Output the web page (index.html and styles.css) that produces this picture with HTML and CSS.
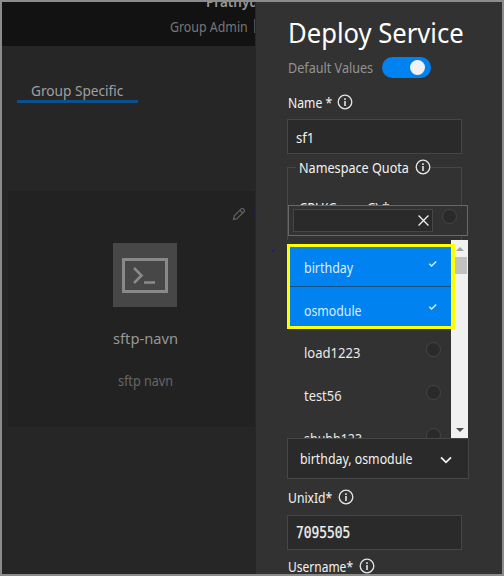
FILE: index.html
```html
<!DOCTYPE html>
<html lang="en">
<head>
<meta charset="utf-8">
<title>Deploy Service</title>
<link rel="stylesheet" href="styles.css">
</head>
<body>
<svg class="defs" width="0" height="0">
  <symbol id="info" viewBox="0 0 16 16"><circle cx="8" cy="8" r="6.8" fill="none" stroke="#e6e6e6" stroke-width="1.3"/><path d="M8 4.2v1.7M8 7v5" stroke="#f0f0f0" stroke-width="1.5"/></symbol>
  <symbol id="check" viewBox="0 0 10 8"><path d="M1.3 3.8 3.6 6 8.2 1.4" fill="none" stroke="#dceeff" stroke-width="1.4"/></symbol>
</svg>
<div class="frame">
  <main class="page">
    <header class="topbar">
      <div class="user"><span class="t">Prathyusha</span></div>
      <div class="role"><span class="t">Group Admin</span><i></i></div>
    </header>
    <nav class="tabs"><a class="tab"><span class="t">Group Specific</span></a></nav>
    <section class="card">
      <div class="actions">
        <svg width="14" height="14" viewBox="0 0 14 14" fill="none" stroke="#626262" stroke-width="1.2"><path d="M1.5 12.5 2.3 8.8 9.4 1.7a1.2 1.2 0 0 1 1.7 0l1.1 1.1a1.2 1.2 0 0 1 0 1.7L5 11.6ZM7.9 3.2l2.8 2.8"/></svg>
        <span class="cut"></span>
      </div>
      <div class="tile"><svg width="46" height="35" viewBox="0 0 46 35" fill="none" stroke="#898989"><path d="M1.5 1.5h43v32h-43Z" stroke-width="3"/><path d="m12 10 7.5 7.5L12 25" stroke-width="2.6"/><path d="M22 24.5h11" stroke-width="2.6"/></svg></div>
      <div class="card-title"><span class="t">sftp-navn</span></div>
      <div class="card-sub"><span class="t">sftp navn</span></div>
    </section>
  </main>
  <aside class="panel">
    <h1><span class="t">Deploy Service</span></h1>
    <div class="switch-row"><span class="t">Default Values</span><div class="switch"></div></div>
    <div class="label name"><span class="t">Name *</span><svg><use href="#info"/></svg></div>
    <div class="input sf"><span class="t">sf1</span></div>
    <div class="group">
      <div class="label legend"><span class="t">Namespace Quota</span><svg><use href="#info"/></svg></div>
      <div class="cpu"><span class="t">CPU(Cores-C) *</span></div>
    </div>
    <div class="select"><span class="t">birthday, osmodule</span><svg width="12" height="8" viewBox="0 0 12 8"><path d="m1 1.3 5 5 5-5" fill="none" stroke="#f2f2f2" stroke-width="1.8"/></svg></div>
    <div class="label unix"><span class="t">UnixId*</span><svg><use href="#info"/></svg></div>
    <div class="input id"><span class="t">7095505</span></div>
    <div class="label username"><span class="t">Username*</span><svg><use href="#info"/></svg></div>
    <div class="dropdown">
      <div class="search"><div class="search-box"><svg width="11" height="11" viewBox="0 0 10 10"><path d="m.5.5 9 9m0-9-9 9" stroke="#eee" stroke-width="1.2"/></svg></div><i class="radio"></i></div>
      <div class="listing">
        <div class="options">
          <div class="option on birthday"><span class="t">birthday</span><svg width="10" height="8"><use href="#check"/></svg></div>
          <div class="option on osmodule"><span class="t">osmodule</span><svg width="10" height="8"><use href="#check"/></svg></div>
          <div class="option load"><span class="t">load1223</span><i class="radio"></i></div>
          <div class="option test"><span class="t">test56</span><i class="radio"></i></div>
          <div class="option shubh"><span class="t">shubh123</span><i class="radio"></i></div>
        </div>
        <div class="scroll"><i class="up"></i><i class="thumb"></i><i class="down"></i></div>
      </div>
      <div class="highlight"></div>
    </div>
    <i class="speck"></i>
  </aside>
</div>
</body>
</html>
```
FILE: styles.css
```css
* { box-sizing: border-box; }
body { margin: 0; background: #323232; color: #f2f2f2; font: 15px/20px "Noto Sans", sans-serif; }
.defs { display: block; }
.frame { display: flex; width: 504px; height: 576px; border: 2px solid #8b8b8b; overflow: hidden; }
.t { display: inline-block; white-space: nowrap; transform: scaleX(var(--s, .84)); transform-origin: 0 50%; }

.page { width: 253px; flex: none; background: #262626; overflow: hidden; }
.topbar { height: 44px; background: #121212; overflow: hidden; }
.user { height: 15px; margin: -11px 0 0 204px; font-weight: 600; color: #989898; --s: .9; }
.role { display: flex; height: 20px; margin: 10px 0 0 168px; color: #777; --s: .825; }
.role .t { width: 84px; flex: none; }
.role i { width: 2px; height: 14px; margin-top: 3px; background: #4a5055; }
.tabs { padding: 34px 0 0 15px; }
.tab { display: block; width: 121px; height: 23px; padding-left: 14px; border-bottom: 3px solid #08518c; color: #a0a0a0; --s: .91; }
.card { height: 236px; margin: 88px 0 0 6px; background: #222; color: #979797; overflow: hidden; }
.actions { display: flex; justify-content: space-between; height: 51px; padding: 16px 0 0 224px; }
.cut { width: 1px; height: 6px; margin-top: 2px; background: #20204c; }
.tile { display: flex; width: 64px; height: 64px; margin: 1px 0 0 105px; background: #474747; align-items: center; justify-content: center; }
.card-title { margin: 21px 0 0 105px; --s: .98; }
.card-sub { margin: 22px 0 0 110px; color: #666; }

.panel { position: relative; width: 247px; flex: none; padding-left: 31px; background: #323232; border-left: 1px solid #272727; }
.panel h1 { height: 36px; margin: 10px 0 0 1px; font-size: 28px; line-height: 40px; font-weight: 400; color: #fff; --s: .915; }
.switch-row { display: flex; height: 20px; margin: 9px 0 0 1px; color: #929292; }
.switch-row .t { width: 94px; flex: none; }
.switch { width: 49px; height: 21px; padding: 3px 6px; background: #0082f0; border-radius: 11px; }
.switch::after { content: ""; display: block; width: 15px; height: 15px; margin-left: auto; border-radius: 50%; background: #f2f2f2; }
.label { display: flex; height: 20px; padding-left: 1px; align-items: center; --s: .81; }
.label .t { flex: none; }
.label svg { width: 16px; height: 16px; }
.name { margin-top: 15px; }
.name .t { width: 49px; }
.input { width: 175px; height: 35px; padding: 7px 0 0 8px; background: #2a2a2a; border: 1px solid #464646; --s: .88; }
.sf { margin-top: 7px; }
.group { width: 175px; height: 260px; margin-top: 13px; border: 1px solid #464646; }
.legend { width: 135px; height: 20px; margin: -11px 0 0 8px; padding-left: 3px; background: #323232; --s: .842; }
.legend .t { width: 116px; }
.cpu { margin: 20px 0 0 11px; height: 20px; --s: .86; }
.select { display: flex; position: relative; z-index: 3; width: 182px; height: 41px; margin-top: 11px; padding: 9px 0 0 12px; background: #2a2a2a; border: 1px solid #464646; --s: .822; }
.select .t { width: 140px; flex: none; }
.select svg { margin-top: 8px; }
.unix { margin-top: 8px; }
.unix .t { width: 50px; }
.id { margin-top: 8px; font-family: "DejaVu Sans Mono", monospace; --s: .86; -webkit-text-stroke: .25px; }
.username { margin-top: 6px; --s: .8; }
.username .t { width: 71px; }

.dropdown { position: absolute; z-index: 2; left: 31px; top: 203px; width: 182px; }
.search { display: flex; width: 180px; height: 31px; margin-left: 1px; padding: 3px 4px; background: #323232; border: 1px solid #686868; gap: 9px; }
.search-box { display: flex; width: 140px; height: 23px; align-items: center; justify-content: flex-end; padding-right: 3px; background: #2a2a2a; border: 1px solid #464646; }
.radio { flex: none; width: 15px; height: 15px; border: 1px solid #464646; border-radius: 50%; background: #2a2a2a; }
.listing { display: flex; height: 200px; margin-top: 4px; overflow: hidden; }
.options { width: 164px; flex: none; padding: 7px 0 0 2px; background: #323232; }
.option { display: flex; height: 43px; padding-left: 15px; color: #e9e9e9; }
.option .t { width: 122px; flex: none; }
.option svg { margin: 3px 0 0 2px; }
.on { background: #0082f0; color: #dceeff; }
.birthday { height: 40px; border-bottom: 1px solid #17507f; padding-top: 10px; --s: .83; }
.osmodule { height: 39px; padding-top: 13px; --s: .82; }
.load { padding-top: 16px; --s: .87; }
.test { padding-top: 16px; --s: .86; }
.shubh { padding-top: 16px; --s: .83; }
.scroll { width: 17px; background: #f1f1f1; padding-top: 7px; }
.scroll i { display: block; margin: 0 auto; }
.up { width: 0; border: 4px solid transparent; border-top: 0; border-bottom-color: #a2a2a2; }
.thumb { width: 15px; height: 17px; background: #c1c1c1; }
.scroll .thumb { margin-top: 6px; }
.down { width: 0; border: 4px solid transparent; border-bottom: 0; border-top-color: #505050; }
.scroll .down { margin-top: 154px; }
.highlight { position: absolute; left: 0; top: 39px; width: 168px; height: 85px; border: 3px solid #ff0; }
.speck { position: absolute; left: 16px; top: 248px; width: 2px; height: 2px; background: #1818a8; }
```
